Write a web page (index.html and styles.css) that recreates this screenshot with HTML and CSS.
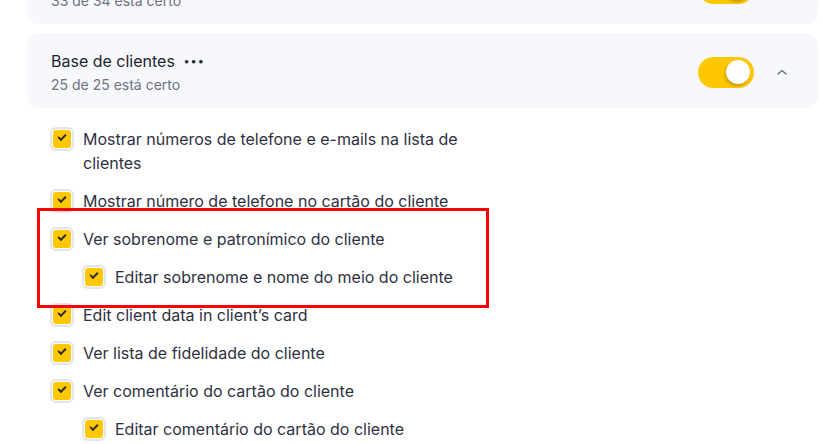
FILE: index.html
```html
<!DOCTYPE html>
<html lang="pt">
<head>
  <meta charset="UTF-8">
  <link rel="stylesheet" href="styles.css">
</head>
<body>
  <div class="page">
    <div class="card first">
      <div class="card-text">
        <div class="title">Direitos de acesso</div>
        <div class="sub">33 de 34 está certo</div>
      </div>
      <div class="switch"><span class="knob"></span></div>
      <div class="chev"></div>
    </div>

    <div class="card">
      <div class="card-text">
        <div class="title">Base de clientes <span class="dots">•••</span></div>
        <div class="sub">25 de 25 está certo</div>
      </div>
      <div class="switch"><span class="knob"></span></div>
      <div class="chev">
        <svg width="12" height="8" viewBox="0 0 12 8"><path d="M2 6 L6 2.5 L10 6" fill="none" stroke="#6b7386" stroke-width="1.6" stroke-linecap="round" stroke-linejoin="round"/></svg>
      </div>
    </div>

    <div class="list">
      <div class="row"><span class="check"><i></i></span><span class="label">Mostrar números de telefone e e-mails na lista de clientes</span></div>
      <div class="row"><span class="check"><i></i></span><span class="label">Mostrar número de telefone no cartão do cliente</span></div>
      <div class="row"><span class="check"><i></i></span><span class="label">Ver sobrenome e patronímico do cliente</span></div>
      <div class="row sub-row"><span class="check"><i></i></span><span class="label">Editar sobrenome e nome do meio do cliente</span></div>
      <div class="row"><span class="check"><i></i></span><span class="label">Edit client data in client’s card</span></div>
      <div class="row"><span class="check"><i></i></span><span class="label">Ver lista de fidelidade do cliente</span></div>
      <div class="row"><span class="check"><i></i></span><span class="label">Ver comentário do cartão do cliente</span></div>
      <div class="row sub-row"><span class="check"><i></i></span><span class="label">Editar comentário do cartão do cliente</span></div>
    </div>

    <div class="mark"></div>
  </div>
</body>
</html>
```
FILE: styles.css
```css
* { box-sizing: border-box; }
body { margin: 0; background: #fff; font-family: Inter, "Noto Sans", sans-serif; color: #2e3142; overflow: hidden; }
.page { position: relative; padding: 0 5px 0 27px; margin-top: -51px; }

.card {
  display: flex;
  align-items: center;
  background: #f7f8fb;
  border-radius: 12px;
  padding: 16px 24px 13px 24px;
  margin-bottom: 9px;
}
.card-text { flex: 1; }
.title { font-size: 16px; line-height: 24px; height: 24px; color: #22252f; }
.dots { font-size: 11px; line-height: 0; letter-spacing: 1px; margin-left: 4px; position: relative; top: -2px; }
.sub { font-size: 14px; line-height: 20px; margin-top: 2px; color: #6e7282; }

.switch {
  width: 56px;
  height: 31px;
  border-radius: 16px;
  background: #ffc800;
  display: flex;
  align-items: center;
  justify-content: flex-end;
  padding: 0 4px;
}
.knob {
  width: 24px;
  height: 24px;
  border-radius: 50%;
  background: #fff;
  box-shadow: -1px 2px 3px rgba(0, 0, 0, 0.25);
}
.chev { width: 24px; height: 24px; margin-left: 16px; display: flex; align-items: center; justify-content: center; }

.list { padding: 10px 0 0 23px; }
.row { display: flex; align-items: flex-start; margin-bottom: 14px; font-size: 16px; line-height: 24px; }
.row.sub-row { padding-left: 32px; }
.label { max-width: 400px; }

.check {
  flex: none;
  width: 24px;
  height: 24px;
  border: 2px solid #e3e5ec;
  border-radius: 6px;
  padding: 1px;
  margin-right: 9px;
  background: #fff;
}
.check i {
  display: block;
  width: 100%;
  height: 100%;
  border-radius: 3px;
  background: #ffc800;
  position: relative;
}
.check i::after {
  content: "";
  position: absolute;
  left: 5px;
  top: 4px;
  width: 6px;
  height: 3px;
  border-left: 2px solid #2a2a2a;
  border-bottom: 2px solid #2a2a2a;
  transform: rotate(-45deg);
}

.mark {
  position: absolute;
  left: 37px;
  top: 259px;
  width: 452px;
  height: 100px;
  border: 3px solid #f00;
}
```
